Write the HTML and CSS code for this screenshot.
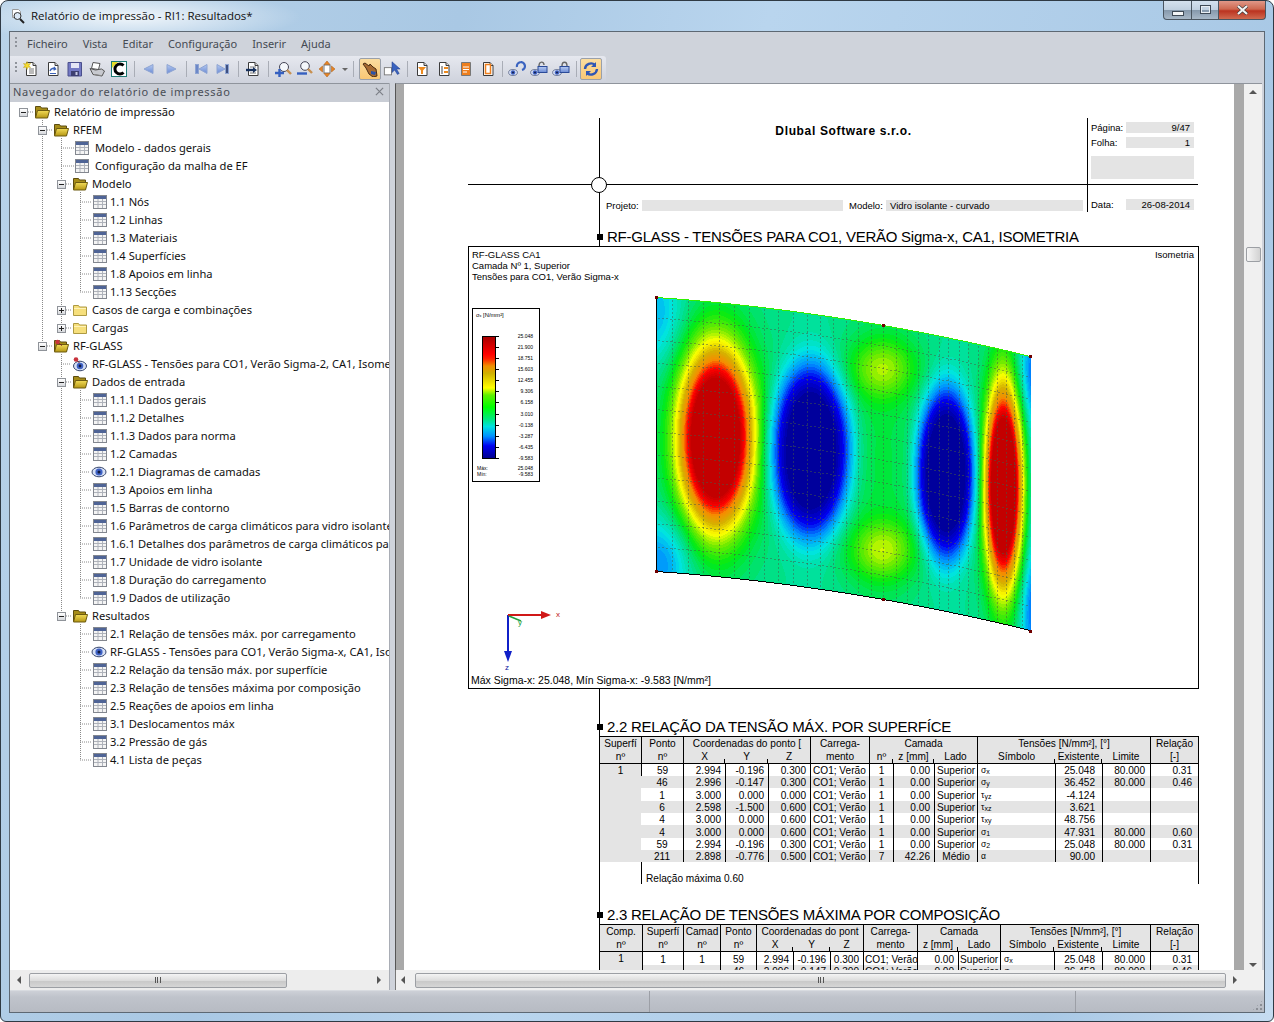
FILE: index.html
```html
<!DOCTYPE html>
<html lang="pt">
<head>
<meta charset="utf-8">
<title>Relatório de impressão</title>
<link rel="stylesheet" href="styles.css">
</head>
<body>
<svg class="sprite" width="0" height="0" aria-hidden="true">
  <defs>
    <linearGradient id="gold" x1="0" y1="0" x2="0" y2="1"><stop offset="0" stop-color="#f3dc58"/><stop offset="1" stop-color="#b49614"/></linearGradient>
    <linearGradient id="blu" x1="0" y1="0" x2="0" y2="1"><stop offset="0" stop-color="#b7cbf2"/><stop offset="1" stop-color="#6a8ad4"/></linearGradient>
    <symbol id="t" viewBox="0 0 14 14"><rect x=".5" y=".5" width="13" height="13" fill="#f4f4f4" stroke="#83878f"/><rect x="1" y="1" width="12" height="3" fill="#4f6496"/><path d="M1 6.500h12M1 9.500h12M5 4v9M9.500 4v9" stroke="#aeb2ba" fill="none"/></symbol>
    <symbol id="fo" viewBox="0 0 16 14"><path d="M1.500 1.500h5l1 1.500h6v9h-12z" fill="#a68c18" stroke="#5c4c10"/><path d="M3.500 5.500h12l-2 7.500h-12z" fill="url(#gold)" stroke="#6c5a10"/></symbol>
    <symbol id="fc" viewBox="0 0 16 14"><path d="M1.500 2.500h5l1 1.500h7v8.500h-13z" fill="#f6df7c" stroke="#ae9a42"/><path d="M2 5.500h12" stroke="#fff3b8"/></symbol>
    <symbol id="fr" viewBox="0 0 16 14"><path d="M1.500 1.500h5l1 1.500h6v9h-12z" fill="#a68c18" stroke="#5c4c10"/><path d="M3.500 5.500h12l-2 7.500h-12z" fill="url(#gold)" stroke="#6c5a10"/><circle cx="4.500" cy="3" r="2.200" fill="#c8323c"/><path d="M6 4.500l3 2" stroke="#7a2228"/></symbol>
    <symbol id="e" viewBox="0 0 16 14"><ellipse cx="8" cy="7" rx="7" ry="4.800" fill="#d5dff4" stroke="#39486e"/><circle cx="8" cy="7" r="3.600" fill="#3f62c6"/><circle cx="8" cy="7" r="1.500" fill="#101a40"/></symbol>
    <symbol id="er" viewBox="0 0 16 16"><ellipse cx="9" cy="10" rx="6.500" ry="4.800" fill="#d5dff4" stroke="#39486e"/><circle cx="9" cy="10" r="3.300" fill="#3f62c6"/><circle cx="9" cy="10" r="1.400" fill="#101a40"/><circle cx="5" cy="3.500" r="2.300" fill="#c8323c"/><path d="M6.500 5l2 2" stroke="#7a2228"/></symbol>
    <symbol id="doc" viewBox="0 0 16 16"><path d="M3.500 1.500h6.500l3 3v10h-9.500z" fill="#fff" stroke="#3c3c3c"/><path d="M10 1.500v3h3" fill="#d8d8d8" stroke="#3c3c3c"/></symbol>
  </defs>
</svg>

<div class="window">
  <header class="titlebar">
    <svg class="title-icon" viewBox="0 0 16 16"><path d="M2.500 1.500h6l2 2v6h-8z" fill="#fff" stroke="#9a9a9a"/><circle cx="7.500" cy="8" r="3.500" fill="#dbe8f5" stroke="#333"/><path d="M10 11l4 4" stroke="#222" stroke-width="2"/></svg>
    <span class="title-text">Relatório de impressão - RI1: Resultados*</span>
    <div class="caption">
      <span class="cap cap-min"><i class="g-min"></i></span>
      <span class="cap cap-max"><i class="g-max"></i></span>
      <span class="cap cap-close"><svg class="g-close" viewBox="0 0 12 10"><path d="M1.500 1l9 8M10.500 1l-9 8" stroke="#3b3b3b" stroke-width="3.400"/><path d="M1.500 1l9 8M10.500 1l-9 8" stroke="#f4f4f4" stroke-width="2.200"/></svg></span>
    </div>
  </header>

  <div class="client">
    <nav class="menubar">
      <i class="grip"></i>
      <span>Ficheiro</span><span>Vista</span><span>Editar</span><span>Configuração</span><span>Inserir</span><span>Ajuda</span>
    </nav>
    <div class="toolbar">
      <i class="grip grip-tb"></i>
      <span class="tb"><svg class="ic" viewBox="0 0 16 16"><use href="#doc"/><path d="M4 .5l1 2.500 2.500-.5-1.500 2 1.500 2-2.500-.5-1 2.500-1-2.500-2.500.5 1.500-2-1.500-2 2.500.5z" fill="#f6dc2e" stroke="#b89a10" stroke-width=".5"/><path d="M6 8h5M6 10h5M6 12h5" stroke="#777"/></svg></span>
      <span class="tb"><svg class="ic" viewBox="0 0 16 16"><use href="#doc"/><path d="M5 10c1-3 4-3 5-2M9 6l1.500 2-2 1" fill="none" stroke="#3b62b8" stroke-width="1.400"/><path d="M5 12.500h6" stroke="#3b62b8"/></svg></span>
      <span class="tb"><svg class="ic" viewBox="0 0 16 16"><path d="M1 1.500h13.500v13.500h-13.500z" fill="#7379c4" stroke="#4a4f8c"/><rect x="4" y="2" width="8" height="5" fill="#e4e6f6"/><rect x="4" y="10" width="8" height="5" fill="#3c3f70"/><rect x="8.500" y="11" width="2" height="3" fill="#c8cbe6"/></svg></span>
      <span class="tb"><svg class="ic" viewBox="0 0 16 16"><path d="M4 1.500l7 1-1.500 6-7-1z" fill="#fff" stroke="#555"/><path d="M1 7.500l3 6 9 1.500 2.500-5-3-2-6 1z" fill="#c7c9cf" stroke="#555"/><path d="M5 13.500l8 1.200" stroke="#888"/></svg></span>
      <span class="tb"><svg class="ic" viewBox="0 0 16 16"><rect x=".5" y=".5" width="15" height="15" fill="#fff" stroke="#1d7a74"/><path d="M1 1h6l-6 6z" fill="#e5de2a"/><path d="M12.500 4.500a5 5 0 1 0 0 7" fill="none" stroke="#000" stroke-width="3"/></svg></span>
      <i class="sep"></i>
      <span class="tb"><svg class="ic" viewBox="0 0 16 16"><path d="M3 8l9-4.500v9z" fill="url(#blu)" stroke="#8ea4d2"/></svg></span>
      <span class="tb"><svg class="ic" viewBox="0 0 16 16"><path d="M13 8l-9-4.500v9z" fill="url(#blu)" stroke="#8ea4d2"/></svg></span>
      <i class="sep"></i>
      <span class="tb"><svg class="ic" viewBox="0 0 16 16"><path d="M6 8l8-4.500v9z" fill="url(#blu)" stroke="#8ea4d2"/><rect x="2.500" y="3.500" width="3" height="9" fill="#6d88c8" stroke="#8ea4d2"/></svg></span>
      <span class="tb"><svg class="ic" viewBox="0 0 16 16"><path d="M10 8l-8-4.500v9z" fill="url(#blu)" stroke="#8ea4d2"/><rect x="10.500" y="3.500" width="3" height="9" fill="#3d4f80" stroke="#8ea4d2"/></svg></span>
      <i class="sep"></i>
      <span class="tb"><svg class="ic" viewBox="0 0 16 16"><use href="#doc"/><path d="M5 6h6M5 12h6" stroke="#777"/><path d="M1 9h8" stroke="#16305c" stroke-width="2.400"/><path d="M8 6l4 3-4 3z" fill="#16305c"/></svg></span>
      <i class="sep"></i>
      <span class="tb"><svg class="ic ic-wide" viewBox="0 0 18 16"><circle cx="10" cy="6" r="4.500" fill="#f4f7fb" stroke="#445"/><path d="M13 9l4 4" stroke="#c89050" stroke-width="2.400"/><path d="M1 12h9M5.500 8v8" stroke="#3560c0" stroke-width="2.400"/></svg></span>
      <span class="tb"><svg class="ic ic-wide" viewBox="0 0 18 16"><circle cx="9" cy="5" r="4.300" fill="#f4f7fb" stroke="#445"/><path d="M12 8l4 4" stroke="#c89050" stroke-width="2.400"/><path d="M1 12.500h10" stroke="#3560c0" stroke-width="2.400"/></svg></span>
      <span class="tb tb-drop"><svg class="ic" viewBox="0 0 16 16"><rect x="5" y="4" width="6" height="8" fill="#fff" stroke="#777"/><path d="M8 0l3 3.500h-6zM8 16l-3-3.500h6zM0 8l3.500-3v6zM16 8l-3.500-3v6z" fill="#e88424" stroke="#a85a10" stroke-width=".5"/></svg><i class="drop"></i></span>
      <i class="sep sep-wide"></i>
      <span class="tb tb-on"><svg class="ic" viewBox="0 0 16 16"><path d="M1 3l2-1 4 3 1-2 3 3 3 2 1 7-4 1-4-3-3-6z" fill="#a66a32" stroke="#4a2c12"/><path d="M9 10l5 1-1 3-4-1z" fill="#2a52a8"/></svg></span>
      <span class="tb"><svg class="ic ic-wide" viewBox="0 0 20 16"><rect x="1.500" y="6.500" width="8" height="8" fill="#fff" stroke="#777"/><path d="M10 0v12l3-3 3 5 2-1-3-5h4z" fill="#3a63c0" stroke="#24408a" stroke-width=".6"/></svg></span>
      <i class="sep"></i>
      <span class="tb"><svg class="ic" viewBox="0 0 16 16"><use href="#doc"/><path d="M4 6h8l-3 3.500v3.500h-2v-3.500z" fill="#ee8a1e"/></svg></span>
      <span class="tb"><svg class="ic" viewBox="0 0 16 16"><use href="#doc"/><path d="M6 5v8" stroke="#444"/><path d="M8 6h4v2h-4zM8 10h4v2h-4z" fill="#ee8a1e"/></svg></span>
      <span class="tb"><svg class="ic" viewBox="0 0 16 16"><path d="M3.500 1.500h9v13h-9z" fill="#ee7f1e" stroke="#777"/><path d="M5 6h6M5 8.500h6M5 11h4" stroke="#fff" stroke-width="1.200"/></svg></span>
      <span class="tb"><svg class="ic" viewBox="0 0 16 16"><use href="#doc"/><path d="M5.500 3.500h5v9h-5z" fill="#fff" stroke="#ee7f1e" stroke-width="1.500"/></svg></span>
      <i class="sep sep-thin"></i>
      <span class="tb"><svg class="ic ic-wide" viewBox="0 0 18 16"><use href="#e" x="0" y="7" width="10" height="9"/><path d="M9 6a4 4 0 1 1 5 3M14 1a4 4 0 0 0-1 0" fill="none" stroke="#3a63c0" stroke-width="2.200"/></svg></span>
      <span class="tb"><svg class="ic ic-wide" viewBox="0 0 18 16"><use href="#e" x="0" y="7" width="10" height="9"/><rect x="8" y="5.500" width="9" height="6" fill="url(#blu)" stroke="#2a4a98"/><path d="M9 5c0-5 5-5 5-1" fill="none" stroke="#666" stroke-width="1.400"/></svg></span>
      <span class="tb"><svg class="ic ic-wide" viewBox="0 0 18 16"><use href="#e" x="0" y="7" width="10" height="9"/><rect x="8" y="5.500" width="9" height="6" fill="url(#blu)" stroke="#2a4a98"/><path d="M10 5c0-5 5-5 5 0" fill="none" stroke="#666" stroke-width="1.400"/></svg></span>
      <i class="sep"></i>
      <span class="tb tb-on"><svg class="ic ic-wide" viewBox="0 0 16 16"><path d="M2 8a6 6 0 0 1 10-4M14 8a6 6 0 0 1-10 4" fill="none" stroke="#2f56b4" stroke-width="2.400"/><path d="M13 1v5h-5zM3 15v-5h5z" fill="#2f56b4"/></svg></span>
    </div>

    <div class="panes">
      <aside class="nav">
        <div class="nav-head"><span>Navegador do relatório de impressão</span><svg class="nav-x" viewBox="0 0 10 10"><path d="M1 1l8 8M9 1l-8 8" stroke="#7c7f86" stroke-width="1.300"/></svg></div>
        <div class="tree">
          <svg class="tree-lines" width="120" height="670"><path d="M32.500 18v226M51.500 36v190M70.500 90v100M51.500 252v262M70.500 288v208M70.500 522v136M18 10h6M37 28h6M37 244h6M51 46h13M51 64h13M56 82h6M56 208h6M56 226h6M51 262h10M56 280h6M56 514h6M70 100h12M70 118h12M70 136h12M70 154h12M70 172h12M70 190h12M70 298h12M70 316h12M70 334h12M70 352h12M70 370h10M70 388h12M70 406h12M70 424h12M70 442h12M70 460h12M70 478h12M70 496h12M70 532h12M70 550h10M70 568h12M70 586h12M70 604h12M70 622h12M70 640h12M70 658h12" stroke="#8a8a8a" stroke-dasharray="1 1" fill="none"/></svg>
          <div class="row r0"><i class="exp"></i><svg class="fold"><use href="#fo"/></svg><span>Relatório de impressão</span></div>
          <div class="row r1"><i class="exp"></i><svg class="fold"><use href="#fo"/></svg><span>RFEM</span></div>
          <div class="row r2leaf"><svg class="tbl"><use href="#t"/></svg><span>Modelo - dados gerais</span></div>
          <div class="row r2leaf"><svg class="tbl"><use href="#t"/></svg><span>Configuração da malha de EF</span></div>
          <div class="row r2"><i class="exp"></i><svg class="fold"><use href="#fo"/></svg><span>Modelo</span></div>
          <div class="row r3"><svg class="tbl"><use href="#t"/></svg><span>1.1 Nós</span></div>
          <div class="row r3"><svg class="tbl"><use href="#t"/></svg><span>1.2 Linhas</span></div>
          <div class="row r3"><svg class="tbl"><use href="#t"/></svg><span>1.3 Materiais</span></div>
          <div class="row r3"><svg class="tbl"><use href="#t"/></svg><span>1.4 Superfícies</span></div>
          <div class="row r3"><svg class="tbl"><use href="#t"/></svg><span>1.8 Apoios em linha</span></div>
          <div class="row r3"><svg class="tbl"><use href="#t"/></svg><span>1.13 Secções</span></div>
          <div class="row r2"><i class="exp exp-plus"></i><svg class="fold"><use href="#fc"/></svg><span>Casos de carga e combinações</span></div>
          <div class="row r2"><i class="exp exp-plus"></i><svg class="fold"><use href="#fc"/></svg><span>Cargas</span></div>
          <div class="row r1"><i class="exp"></i><svg class="fold"><use href="#fr"/></svg><span>RF-GLASS</span></div>
          <div class="row r2pin"><svg class="pin"><use href="#er"/></svg><span>RF-GLASS - Tensões para CO1, Verão Sigma-2, CA1, Isometria</span></div>
          <div class="row r2"><i class="exp"></i><svg class="fold"><use href="#fo"/></svg><span>Dados de entrada</span></div>
          <div class="row r3"><svg class="tbl"><use href="#t"/></svg><span>1.1.1 Dados gerais</span></div>
          <div class="row r3"><svg class="tbl"><use href="#t"/></svg><span>1.1.2 Detalhes</span></div>
          <div class="row r3"><svg class="tbl"><use href="#t"/></svg><span>1.1.3 Dados para norma</span></div>
          <div class="row r3"><svg class="tbl"><use href="#t"/></svg><span>1.2 Camadas</span></div>
          <div class="row r3eye"><svg class="eye"><use href="#e"/></svg><span>1.2.1 Diagramas de camadas</span></div>
          <div class="row r3"><svg class="tbl"><use href="#t"/></svg><span>1.3 Apoios em linha</span></div>
          <div class="row r3"><svg class="tbl"><use href="#t"/></svg><span>1.5 Barras de contorno</span></div>
          <div class="row r3"><svg class="tbl"><use href="#t"/></svg><span>1.6 Parâmetros de carga climáticos para vidro isolante</span></div>
          <div class="row r3"><svg class="tbl"><use href="#t"/></svg><span>1.6.1 Detalhes dos parâmetros de carga climáticos para vidro</span></div>
          <div class="row r3"><svg class="tbl"><use href="#t"/></svg><span>1.7 Unidade de vidro isolante</span></div>
          <div class="row r3"><svg class="tbl"><use href="#t"/></svg><span>1.8 Duração do carregamento</span></div>
          <div class="row r3"><svg class="tbl"><use href="#t"/></svg><span>1.9 Dados de utilização</span></div>
          <div class="row r2"><i class="exp"></i><svg class="fold"><use href="#fo"/></svg><span>Resultados</span></div>
          <div class="row r3"><svg class="tbl"><use href="#t"/></svg><span>2.1 Relação de tensões máx. por carregamento</span></div>
          <div class="row r3eye"><svg class="eye"><use href="#e"/></svg><span>RF-GLASS - Tensões para CO1, Verão Sigma-x, CA1, Isometria</span></div>
          <div class="row r3"><svg class="tbl"><use href="#t"/></svg><span>2.2 Relação da tensão máx. por superfície</span></div>
          <div class="row r3"><svg class="tbl"><use href="#t"/></svg><span>2.3 Relação de tensões máxima por composição</span></div>
          <div class="row r3"><svg class="tbl"><use href="#t"/></svg><span>2.5 Reações de apoios em linha</span></div>
          <div class="row r3"><svg class="tbl"><use href="#t"/></svg><span>3.1 Deslocamentos máx</span></div>
          <div class="row r3"><svg class="tbl"><use href="#t"/></svg><span>3.2 Pressão de gás</span></div>
          <div class="row r3"><svg class="tbl"><use href="#t"/></svg><span>4.1 Lista de peças</span></div>
        </div>
        <div class="hscroll hs-left">
          <i class="arr arr-l"></i>
          <div class="thumb"><i class="knurl"></i></div>
          <i class="arr arr-r"></i>
        </div>
      </aside>

      <main class="viewer">
        <div class="viewer-top">
          <div class="desk">
            <div class="page">
              <div class="sheet">
                <i class="rule"></i>
                <div class="head">
                  <i class="crosshair"></i>
                  <div class="head-company"><strong>Dlubal Software s.r.o.</strong></div>
                  <div class="head-side">
                    <div class="kv"><span>Página:</span><b>9/47</b></div>
                    <div class="kv"><span>Folha:</span><b>1</b></div>
                    <div class="blank"></div>
                  </div>
                  <div class="head-meta">
                    <span class="lab-proj">Projeto:</span><b class="val-proj"></b>
                    <span class="lab-mod">Modelo:</span><b class="val-mod">Vidro isolante - curvado</b>
                  </div>
                  <div class="head-date">
                    <div class="kv"><span>Data:</span><b>26-08-2014</b></div>
                  </div>
                </div>

                <h2 class="sec sec-first">RF-GLASS - TENSÕES PARA CO1, VERÃO Sigma-x, CA1, ISOMETRIA</h2>
                <figure class="fig">
                  <div class="fig-top">
                    <div>RF-GLASS CA1<br>Camada Nº 1, Superior<br>Tensões para CO1, Verão Sigma-x</div>
                    <div>Isometria</div>
                  </div>
                  <div class="legend">
                    <div class="leg-title">σₓ [N/mm²]</div>
                    <div class="leg-scale">
                      <i class="leg-bar"></i>
                      <ul class="leg-vals"><li>25.048</li><li>21.900</li><li>18.751</li><li>15.603</li><li>12.455</li><li>9.306</li><li>6.158</li><li>3.010</li><li>-0.138</li><li>-3.287</li><li>-6.435</li><li>-9.583</li></ul>
                    </div>
                    <div class="leg-mm"><span>Máx:</span><span>25.048</span></div>
                    <div class="leg-mm"><span>Mín:</span><span>-9.583</span></div>
                  </div>
                  <canvas id="heat" class="heat" width="400" height="350"></canvas>
                  <svg class="axes" viewBox="0 0 70 70"><path d="M7 8v38" stroke="#1020c8" stroke-width="2"/><path d="M7 8h34" stroke="#d01818" stroke-width="2"/><path d="M40 4l10 4-10 4z" fill="#d01818"/><path d="M3 44l4 11 4-11z" fill="#1020c8"/><path d="M8 9l12 5" stroke="#20a040" stroke-width="1.500"/><text x="55" y="10" class="ax ax-x">x</text><text x="17" y="18" class="ax ax-y">y</text><text x="4" y="63" class="ax ax-z">z</text></svg>
                  <figcaption class="fig-cap">Máx Sigma-x: 25.048, Mín Sigma-x: -9.583 [N/mm²]</figcaption>
                </figure>

                <h2 class="sec sec-22">2.2 RELAÇÃO DA TENSÃO MÁX. POR SUPERFÍCE</h2>
                <table class="rep rep-a">
                  <colgroup><col class="a1"><col class="a2"><col class="a3"><col class="a4"><col class="a5"><col class="a6"><col class="a7"><col class="a8"><col class="a9"><col class="a10"><col class="a11"><col class="a12"><col class="a13"></colgroup>
                  <thead>
                    <tr><th>Superfí</th><th>Ponto</th><th colspan="3">Coordenadas do ponto [</th><th>Carrega-</th><th colspan="3">Camada</th><th colspan="3">Tensões [N/mm²], [°]</th><th>Relação</th></tr>
                    <tr class="h2"><th>nº</th><th>nº</th><th class="tick">X</th><th class="tick">Y</th><th>Z</th><th>mento</th><th class="tick">nº</th><th class="tick">z [mm]</th><th>Lado</th><th class="tick">Símbolo</th><th class="tick">Existente</th><th>Limite</th><th>[-]</th></tr>
                  </thead>
                  <tbody>
                    <tr><td class="c grey" rowspan="8">1</td><td class="c">59</td><td class="n">2.994</td><td class="n">-0.196</td><td class="n">0.300</td><td>CO1; Verão</td><td class="c">1</td><td class="n">0.00</td><td>Superior</td><td class="sym">σ<sub>x</sub></td><td class="ex">25.048</td><td class="li">80.000</td><td class="re">0.31</td></tr>
                    <tr class="alt"><td class="c">46</td><td class="n">2.996</td><td class="n">-0.147</td><td class="n">0.300</td><td>CO1; Verão</td><td class="c">1</td><td class="n">0.00</td><td>Superior</td><td class="sym">σ<sub>y</sub></td><td class="ex">36.452</td><td class="li">80.000</td><td class="re">0.46</td></tr>
                    <tr class="tall"><td class="c">1</td><td class="n">3.000</td><td class="n">0.000</td><td class="n">0.000</td><td>CO1; Verão</td><td class="c">1</td><td class="n">0.00</td><td>Superior</td><td class="sym">τ<sub>yz</sub></td><td class="ex">-4.124</td><td class="li"></td><td class="re"></td></tr>
                    <tr class="alt"><td class="c">6</td><td class="n">2.598</td><td class="n">-1.500</td><td class="n">0.600</td><td>CO1; Verão</td><td class="c">1</td><td class="n">0.00</td><td>Superior</td><td class="sym">τ<sub>xz</sub></td><td class="ex">3.621</td><td class="li"></td><td class="re"></td></tr>
                    <tr><td class="c">4</td><td class="n">3.000</td><td class="n">0.000</td><td class="n">0.600</td><td>CO1; Verão</td><td class="c">1</td><td class="n">0.00</td><td>Superior</td><td class="sym">τ<sub>xy</sub></td><td class="ex">48.756</td><td class="li"></td><td class="re"></td></tr>
                    <tr class="alt tall"><td class="c">4</td><td class="n">3.000</td><td class="n">0.000</td><td class="n">0.600</td><td>CO1; Verão</td><td class="c">1</td><td class="n">0.00</td><td>Superior</td><td class="sym">σ<sub>1</sub></td><td class="ex">47.931</td><td class="li">80.000</td><td class="re">0.60</td></tr>
                    <tr><td class="c">59</td><td class="n">2.994</td><td class="n">-0.196</td><td class="n">0.300</td><td>CO1; Verão</td><td class="c">1</td><td class="n">0.00</td><td>Superior</td><td class="sym">σ<sub>2</sub></td><td class="ex">25.048</td><td class="li">80.000</td><td class="re">0.31</td></tr>
                    <tr class="alt"><td class="c">211</td><td class="n">2.898</td><td class="n">-0.776</td><td class="n">0.500</td><td>CO1; Verão</td><td class="c">7</td><td class="n">42.26</td><td class="c">Médio</td><td class="sym">α</td><td class="ex">90.00</td><td class="li"></td><td class="re"></td></tr>
                  </tbody>
                </table>
                <div class="rep-note"><span>Relação máxima 0.60</span></div>

                <h2 class="sec sec-23">2.3 RELAÇÃO DE TENSÕES MÁXIMA POR COMPOSIÇÃO</h2>
                <table class="rep rep-b">
                  <colgroup><col class="b1"><col class="b2"><col class="b3"><col class="b4"><col class="b5"><col class="b6"><col class="b7"><col class="b8"><col class="b9"><col class="b10"><col class="b11"><col class="b12"><col class="b13"><col class="b14"></colgroup>
                  <thead>
                    <tr><th>Comp.</th><th>Superfí</th><th>Camad</th><th>Ponto</th><th colspan="3">Coordenadas do pont</th><th>Carrega-</th><th colspan="2">Camada</th><th colspan="3">Tensões [N/mm²], [°]</th><th>Relação</th></tr>
                    <tr class="h2"><th>nº</th><th>nº</th><th>nº</th><th>nº</th><th class="tick">X</th><th class="tick">Y</th><th>Z</th><th>mento</th><th class="tick">z [mm]</th><th>Lado</th><th class="tick">Símbolo</th><th class="tick">Existente</th><th>Limite</th><th>[-]</th></tr>
                  </thead>
                  <tbody>
                    <tr class="tall"><td class="c grey">1</td><td class="c">1</td><td class="c">1</td><td class="c">59</td><td class="n">2.994</td><td class="n">-0.196</td><td class="n">0.300</td><td>CO1; Verão</td><td class="n">0.00</td><td>Superior</td><td class="sym">σ<sub>x</sub></td><td class="ex">25.048</td><td class="li">80.000</td><td class="re">0.31</td></tr>
                    <tr class="alt"><td class="c grey"></td><td class="c"></td><td class="c"></td><td class="c">46</td><td class="n">2.996</td><td class="n">-0.147</td><td class="n">0.300</td><td>CO1; Verão</td><td class="n">0.00</td><td>Superior</td><td class="sym">σ<sub>y</sub></td><td class="ex">36.452</td><td class="li">80.000</td><td class="re">0.46</td></tr>
                  </tbody>
                </table>
              </div>
            </div>
          </div>
          <div class="vscroll">
            <i class="arr arr-u"></i>
            <div class="vtrack"><div class="vthumb"></div></div>
            <i class="arr arr-d"></i>
          </div>
        </div>
        <div class="hscroll hs-right">
          <i class="arr arr-l"></i>
          <div class="thumb"><i class="knurl"></i></div>
          <i class="arr arr-r"></i>
        </div>
      </main>
    </div>

    <footer class="status"><i></i><i></i><i class="size"></i></footer>
  </div>
</div>
<script src="script.js"></script>
</body>
</html>
```

FILE: styles.css
```css
* { box-sizing: border-box; }
html, body { margin: 0; padding: 0; height: 100%; background: #fff; overflow: hidden; }
.sprite { position: absolute; }
.window {
  width: 1274px; height: 1022px; display: flex; flex-direction: column;
  border: 1px solid #2f3a44; border-radius: 8px 8px 6px 6px; padding: 0 8px 8px;
  background:
    radial-gradient(ellipse 170px 26px at 130px 16px, rgba(255,255,255,.8), rgba(255,255,255,0)),
    linear-gradient(105deg, #b9d3e9 0%, #a9c8e4 30%, #b9d5ee 50%, #a8c8e5 85%, #c6dcf1 100%);
  font-family: "Noto Sans", sans-serif; color: #000;
}
.titlebar { height: 30px; flex: none; display: flex; align-items: flex-start; position: relative; }
.title-icon { width: 16px; height: 16px; margin: 7px 5px 0 1px; flex: none; }
.title-text { font: 11.500px/30px "Open Sans", sans-serif; color: #111; }
.caption { margin-left: auto; display: flex; height: 19px; margin-right: -1px; }
.cap { display: flex; align-items: center; justify-content: center; height: 19px; border: 1px solid #4a5560; border-top: 0; }
.cap-min { width: 29px; border-radius: 0 0 0 4px; background: linear-gradient(#d4e1ee 0%, #c0d0e0 48%, #8699ac 52%, #a8b8c8 100%); }
.cap-max { width: 27px; border-left: 0; background: linear-gradient(#d4e1ee 0%, #c0d0e0 48%, #8699ac 52%, #a8b8c8 100%); }
.cap-close { width: 47px; border-left: 0; border-radius: 0 0 4px 0; background: linear-gradient(#e09888 0%, #cd6850 45%, #bb3320 55%, #d06a50 100%); }
.g-min { width: 12px; height: 5px; margin-top: 7px; background: #f3f5f7; border: 1px solid #3f4a56; }
.g-max { width: 11px; height: 9px; border: 1px solid #3f4a56; outline: 1px solid #e8edf2; outline-offset: -2px; background: transparent; margin-bottom: 2px; }
.g-close { width: 13px; height: 10px; margin-bottom: 1px; }

.client { flex: 1; min-height: 0; display: flex; flex-direction: column; border: 1px solid #5d6873; background: #cfd3db; }
.menubar { height: 24px; flex: none; display: flex; align-items: center; gap: 15px; padding: 0 0 2px 17px; font-size: 11px; color: #454a52; background: #cfd3db; position: relative; }
.grip { width: 2px; height: 12px; background: repeating-linear-gradient(#8f939b 0 2px, transparent 2px 4px); }
.menubar .grip { position: absolute; left: 5px; top: 5px; }
.toolbar { height: 27px; width: 596px; flex: none; display: flex; align-items: center; position: relative; padding: 0 0 1px 10px; background: linear-gradient(#e6e8ef, #ced2dc); border-radius: 0 3px 3px 0; }
.grip-tb { position: absolute; left: 5px; top: 6px; }
.tb { width: 22px; height: 22px; flex: none; display: flex; align-items: center; justify-content: center; }
.ic { width: 16px; height: 16px; }
.ic-wide { width: 18px; height: 16px; }
.tb-drop { width: 32px; justify-content: flex-start; padding-left: 3px; }
.drop { width: 0; height: 0; margin-left: 7px; border: 3px solid transparent; border-top: 3px solid #666; border-bottom: 0; }
.tb-on { border: 1px solid #9aa0aa; border-radius: 2px; background: linear-gradient(#fbdda0, #f9c775); }
.sep { width: 8px; height: 16px; flex: none; background: linear-gradient(#a9adb6,#a9adb6) center / 1px 16px no-repeat; }
.sep-wide { width: 11px; }
.sep-thin { width: 7px; }

.panes { flex: 1; min-height: 0; display: flex; background: #cfd3db; }
.nav { width: 380px; flex: none; display: flex; flex-direction: column; border-right: 1px solid #a9adb5; }
.nav-head { height: 19px; flex: none; display: flex; align-items: center; justify-content: space-between; padding: 0 5px 3px 3px; font-size: 11px; letter-spacing: .7px; color: #4a4e55; background: #c9cdd5; border-top: 1px solid #8f949c; }
.nav-x { width: 9px; height: 9px; }
.tree { flex: 1; min-height: 0; background: #fff; position: relative; overflow: hidden; padding-top: 1px; font-size: 11.150px; color: #111; }
.tree-lines { position: absolute; left: 0; top: 0; }
.row { height: 18px; display: flex; align-items: center; white-space: nowrap; position: relative; }
.row span { margin-bottom: 2px; }
.row.r0 { padding-left: 9px; }
.row.r1 { padding-left: 28px; }
.row.r2 { padding-left: 47px; }
.row.r2leaf { padding-left: 65px; }
.row.r2pin { padding-left: 61px; }
.row.r3 { padding-left: 83px; }
.row.r3eye { padding-left: 81px; }
.exp { width: 9px; height: 9px; flex: none; margin-right: 6px; border: 1px solid #8f9399; background: linear-gradient(#fff, #d6d8dc) ; position: relative; }
.exp::after { content: ""; position: absolute; left: 1px; top: 3px; width: 5px; height: 1px; background: #222; }
.exp-plus::before { content: ""; position: absolute; left: 3px; top: 1px; width: 1px; height: 5px; background: #222; }
.fold { width: 16px; height: 14px; flex: none; margin-right: 4px; }
.tbl { width: 14px; height: 14px; flex: none; margin-right: 3px; }
.r2leaf .tbl { margin-right: 6px; }
.eye { width: 16px; height: 14px; flex: none; margin-right: 3px; }
.pin { width: 16px; height: 16px; flex: none; margin-right: 5px; }
.r3eye .eye { margin-right: 3px; }

.hscroll { height: 20px; flex: none; display: flex; align-items: center; background: #ededed; position: relative; }
.hs-left { padding: 0 4px; }
.hs-left .thumb { width: 258px; margin-left: 8px; }
.hs-left .arr-r { margin-left: auto; margin-right: 4px; }
.hs-left .arr-l { margin-left: 3px; }
.hs-right { border-left: 1px solid #777; padding-left: 5px; background: #f0f0f0; }
.hs-right .thumb { width: 811px; margin-left: 10px; }
.hs-right .arr-r { margin-left: 7px; }
.thumb { height: 15px; border: 1px solid #9c9fa4; border-radius: 2px; display: flex; align-items: center; justify-content: center; background: linear-gradient(#f4f4f4, #dcdcdc 50%, #c8c8c8 52%, #d6d6d6); }
.knurl { width: 6px; height: 6px; background: repeating-linear-gradient(90deg, #555 0 1px, transparent 1px 2.500px); }
.arr { width: 0; height: 0; flex: none; border: 4px solid transparent; }
.arr-l { border-left: 0; border-right-color: #555; }
.arr-r { border-right: 0; border-left-color: #555; }
.arr-u { border-top: 0; border-bottom-color: #555; }
.arr-d { border-bottom: 0; border-top-color: #555; }

.viewer { flex: 1; min-width: 0; display: flex; flex-direction: column; margin-left: 5px; }
.viewer-top { flex: 1; min-height: 0; display: flex; }
.desk { flex: 1; min-width: 0; display: flex; background: #a9a9a9; padding: 0 10px 0 8px; border-left: 1px solid #555; border-top: 1px solid #8f949c; overflow: hidden; }
.page { flex: 1; background: #fff; overflow: hidden; }
.vscroll { width: 18px; flex: none; display: flex; flex-direction: column; align-items: center; background: #f0f0f0; border-top: 1px solid #8f949c; margin-right: 2px; padding: 6px 0 3px; }
.vtrack { flex: 1; width: 100%; position: relative; padding-top: 153px; }
.vthumb { width: 15px; height: 15px; margin: 0 auto; border: 1px solid #9c9fa4; border-radius: 2px; background: linear-gradient(90deg, #f6f6f6, #d2d2d2); }

.sheet { width: 731px; margin-left: 64px; padding-top: 34px; position: relative; font-family: "Liberation Sans", Arial, sans-serif; color: #000; }
.rule { position: absolute; left: 131px; top: 34px; bottom: -300px; width: 1px; background: #000; }
.head { display: grid; grid-template-columns: 619px 112px; grid-template-rows: 67px 27px; position: relative; }
.crosshair { position: absolute; left: 123px; top: 59px; width: 16px; height: 16px; border: 1px solid #000; border-radius: 50%; background: #fff; z-index: 1; }
.head-company { border-bottom: 1px solid #000; padding: 6px 0 0 132px; text-align: center; font-size: 12px; letter-spacing: .65px; }
.head-company strong { display: block; line-height: 14px; }
.head-side { border-left: 1px solid #000; border-bottom: 1px solid #000; padding: 4px 4px 0 3px; font-size: 9.500px; width: 111px; }
.kv { display: flex; justify-content: space-between; line-height: 11px; height: 11px; margin-bottom: 4px; }
.kv b { width: 68px; background: #e4e4e4; font-weight: 400; text-align: right; padding-right: 4px; }
.blank { height: 23px; margin-top: 8px; background: #e4e4e4; }
.head-meta { display: flex; align-items: center; padding: 0 4px 0 138px; font-size: 9.500px; line-height: 11px; height: 27px; padding-top: 13px; }
.lab-proj { width: 36px; }
.val-proj { width: 201px; height: 11px; background: #e4e4e4; margin-right: 6px; }
.lab-mod { width: 37px; }
.val-mod { width: 197px; height: 11px; background: #e4e4e4; font-weight: 400; padding-left: 4px; }
.head-date { border-left: 1px solid #000; padding: 14px 4px 0 3px; font-size: 9.500px; width: 111px; }

.sec { font-size: 15px; font-weight: 400; line-height: 15px; height: 17px; margin: 0 0 0 139px; position: relative; white-space: nowrap; letter-spacing: -.25px; }
.sec::before { content: ""; position: absolute; left: -10px; top: 5px; width: 6px; height: 6px; background: #000; }
.sec-first { margin-top: 17px; }
.sec-22 { margin-top: 30px; }
.sec-23 { margin-top: 23px; }

.fig { position: relative; margin: 0; width: 731px; height: 443px; border: 1px solid #000; background: #fff; z-index: 1; font-size: 9.500px; line-height: 11px; }
.fig-top { display: flex; justify-content: space-between; padding: 2px 4px 0 3px; }
.heat { position: absolute; left: 171px; top: 43px; }
.axes { position: absolute; left: 32px; top: 360px; width: 70px; height: 70px; overflow: visible; }
.ax { font: 8px "Liberation Sans", sans-serif; }
.ax-x { fill: #c02020; }
.ax-y { fill: #20a040; }
.ax-z { fill: #1020a0; }
.fig-cap { position: absolute; left: 2px; bottom: 2px; font-size: 10.500px; }
.legend { position: absolute; left: 3px; top: 61px; width: 68px; height: 174px; border: 1px solid #000; background: #fff; padding: 3px 6px 0 3px; font-size: 5px; line-height: 6px; }
.leg-title { height: 6px; font-size: 5.800px; }
.leg-scale { display: flex; margin: 18px 0 0 6px; height: 123px; }
.leg-bar { width: 14px; height: 123px; flex: none; border: 1px solid #000; background: linear-gradient(#a80000, #ff0000 14%, #ff2000 18%, #f09000 24%, #d0b000 30%, #ffff00 42%, #60f000 48%, #00ff00 58%, #00e880 68%, #00e0e0 74%, #0090ff 82%, #0000f0 90%, #000090); }
.leg-vals { list-style: none; margin: 0; padding: 0; flex: 1; display: flex; flex-direction: column; justify-content: space-between; }
.leg-vals li { height: 1px; line-height: 1px; text-align: right; position: relative; }
.leg-vals li::before { content: ""; position: absolute; left: 0; top: 0; width: 3px; height: 1px; background: #000; }
.leg-mm { display: flex; justify-content: space-between; padding-left: 1px; height: 6px; }
.leg-scale + .leg-mm { margin-top: 6px; }

.rep { margin-left: 132px; table-layout: fixed; border-collapse: separate; border-spacing: 0; width: 599px; font-size: 10.100px; line-height: 12px; border-top: 1px solid #000; border-right: 1px solid #000; background: #fff; }
.rep th { font-weight: 400; background: #e4e4e4; height: 13px; padding: 1px 0 0; border-left: 1px solid #000; white-space: nowrap; overflow: hidden; text-align: center; }
.rep th:first-child { border-left: 0; }
.rep tr.h2 th { height: 14px; border-bottom: 1px solid #000; }
.rep th.tick { background: #e4e4e4 linear-gradient(#000, #000) right bottom / 1px 4px no-repeat; }
.rep tr.h2 th.tick + th { border-left: 0; }
.rep td { height: 12px; padding: 1px 0 0 2px; line-height: 11px; border-left: 1px solid #000; white-space: nowrap; overflow: hidden; vertical-align: middle; }
.rep tr.tall td { height: 13px; }
.rep td:first-child { border-left: 0; }
.rep tr.alt td { background: #e4e4e4; }
.rep td.grey { background: #e4e4e4; vertical-align: top; }
.rep td.c { text-align: center; padding: 1px 0 0; }
.rep td.n { text-align: right; padding: 1px 4px 0 0; }
.rep td.ex { text-align: right; padding: 1px 7px 0 0; }
.rep td.li { text-align: right; padding: 1px 5px 0 0; }
.rep td.re { text-align: right; padding: 1px 6px 0 0; }
.rep td.sym { font-size: 8.500px; padding-left: 3px; }
.rep-b td { padding-left: 1px; }
.rep sub { font-size: 7px; vertical-align: -1px; line-height: 0; }
.a1 { width: 41px; } .a2 { width: 42px; } .a3 { width: 42px; } .a4 { width: 43px; } .a5 { width: 42px; } .a6 { width: 59px; } .a7 { width: 24px; } .a8 { width: 41px; } .a9 { width: 43px; } .a10 { width: 78px; } .a11 { width: 47px; } .a12 { width: 48px; } .a13 { width: 48px; }
.b1 { width: 42px; } .b2 { width: 41px; } .b3 { width: 37px; } .b4 { width: 36px; } .b5 { width: 37px; } .b6 { width: 37px; } .b7 { width: 33px; } .b8 { width: 54px; } .b9 { width: 41px; } .b10 { width: 42px; } .b11 { width: 54px; } .b12 { width: 48px; } .b13 { width: 48px; } .b14 { width: 48px; }
.rep-note { margin-left: 173px; width: 558px; height: 22px; border-left: 1px solid #000; border-right: 1px solid #000; font-size: 10.100px; line-height: 12px; padding: 11px 0 0 4px; }

.status { height: 22px; flex: none; display: flex; background: linear-gradient(#cdd0d7, #bfc3cb 30%, #b7bbc3); position: relative; border-top: 1px solid #d8dbe0; }
.status i:nth-child(1) { width: 640px; border-right: 1px solid #9c9fa6; }
.status i:nth-child(2) { width: 426px; border-right: 1px solid #9c9fa6; }
.status .size { position: absolute; right: 1px; bottom: 1px; width: 11px; height: 11px; background: radial-gradient(circle at 1px 1px, #8b8f96 1px, transparent 1.200px) 0 0 / 4px 4px; clip-path: polygon(100% 0, 100% 100%, 0 100%); }
```

FILE: script.js
```js
(function () {
  var cv = document.getElementById('heat');
  var ctx = cv.getContext('2d');
  var ox = 640, oy = 290;
  function top(x) {
    var x0 = 656, x1 = 883, x2 = 1030, y0 = 297, y1 = 325, y2 = 356;
    return y0 * (x - x1) * (x - x2) / ((x0 - x1) * (x0 - x2)) +
           y1 * (x - x0) * (x - x2) / ((x1 - x0) * (x1 - x2)) +
           y2 * (x - x0) * (x - x1) / ((x2 - x0) * (x2 - x1));
  }
  var blobs = [
    [715, 437, 36, 88, 29, 2.4], [1003, 485, 18, 100, 29, 2.4],
    [810, 450, 42, 90, -14, 4], [945, 473, 31, 90, -14, 4],
    [718, 440, 56, 122, 4, 2], [1003, 485, 26, 135, 4, 2],
    [882, 368, 34, 30, 6.500, 2], [882, 550, 34, 30, 7, 2],
    [882, 460, 42, 170, 2.500, 2],
    [656, 315, 26, 50, -4.500, 2], [660, 562, 30, 45, -6, 2],
    [1032, 372, 16, 50, -6, 2], [1032, 610, 14, 55, -6, 2], [1034, 490, 8, 140, -3, 2]
  ];
  function field(x, y) {
    var v = 2.3, i, b, r2;
    for (i = 0; i < blobs.length; i++) {
      b = blobs[i];
      r2 = (x - b[0]) * (x - b[0]) / (b[2] * b[2]) + (y - b[1]) * (y - b[1]) / (b[3] * b[3]);
      v += b[4] * Math.exp(-Math.pow(r2, b[5] / 2));
    }
    return Math.max(-9.58, Math.min(25.05, v));
  }
  var stops = [
    [-9.58, 0, 0, 150], [-6.4, 0, 0, 240], [-3.3, 0, 144, 255], [-0.19, 0, 228, 228],
    [3.0, 0, 224, 130], [6.15, 0, 235, 20], [9.3, 110, 235, 0], [12.45, 255, 255, 0],
    [15.6, 212, 178, 0], [18.7, 245, 140, 0], [21.8, 255, 0, 0], [25.05, 195, 0, 0]
  ];
  function color(v) {
    v = Math.round(v / 0.72) * 0.72;
    for (var i = 1; i < stops.length; i++) {
      if (v <= stops[i][0]) {
        var a = stops[i - 1], b = stops[i], t = (v - a[0]) / (b[0] - a[0]);
        return [a[1] + (b[1] - a[1]) * t, a[2] + (b[2] - a[2]) * t, a[3] + (b[3] - a[3]) * t];
      }
    }
    return stops[stops.length - 1].slice(1);
  }
  var img = ctx.createImageData(cv.width, cv.height), x, y;
  for (x = 656; x <= 1030; x++) {
    var t = Math.round(top(x));
    for (y = t; y <= t + 274; y++) {
      var c = color(field(x, y)), p = ((y - oy) * cv.width + (x - ox)) * 4;
      img.data[p] = c[0]; img.data[p + 1] = c[1]; img.data[p + 2] = c[2]; img.data[p + 3] = 255;
    }
  }
  ctx.putImageData(img, 0, 0);

  ctx.fillStyle = 'rgba(70,90,70,.5)';
  var cols = [97,145,190,237,283,328,373,415,458,500,540,580,617,655,693,730,767,800,833,865,897,925,957,985,1015,1045,1072,1098,1122,1145];
  cols.forEach(function (c) {
    var xx = 640 + Math.round(c / 3), t0 = Math.round(top(xx));
    for (var yy = t0 + 2; yy < t0 + 273; yy += 4) ctx.fillRect(xx - ox, yy - oy, 1, 2);
  });
  var rows = [107,175,243,313,382,450,518,588,657,725,795];
  rows.forEach(function (r) {
    var off = (r - 45) / 3;
    for (var xx = 658; xx < 1030; xx += 4) {
      ctx.fillRect(xx - ox, Math.round(top(xx) + off) - oy, 2, 1);
    }
  });

  for (x = 656; x <= 1030; x++) {
    var tt = Math.round(top(x));
    ctx.fillStyle = '#30f000';
    ctx.fillRect(x - ox, tt - oy, 1, 1);
    ctx.fillStyle = '#000';
    ctx.fillRect(x - ox, tt + 274 - oy, 1, 1);
  }
  ctx.fillRect(656 - ox, 297 - oy, 1, 275);
  ctx.fillStyle = '#700000';
  [[656, 297], [883, 325], [1030, 356], [656, 571], [883, 599], [1030, 631]].forEach(function (n) {
    ctx.fillRect(n[0] - ox - 1, n[1] - oy - 1, 3, 3);
  });
})();
```
